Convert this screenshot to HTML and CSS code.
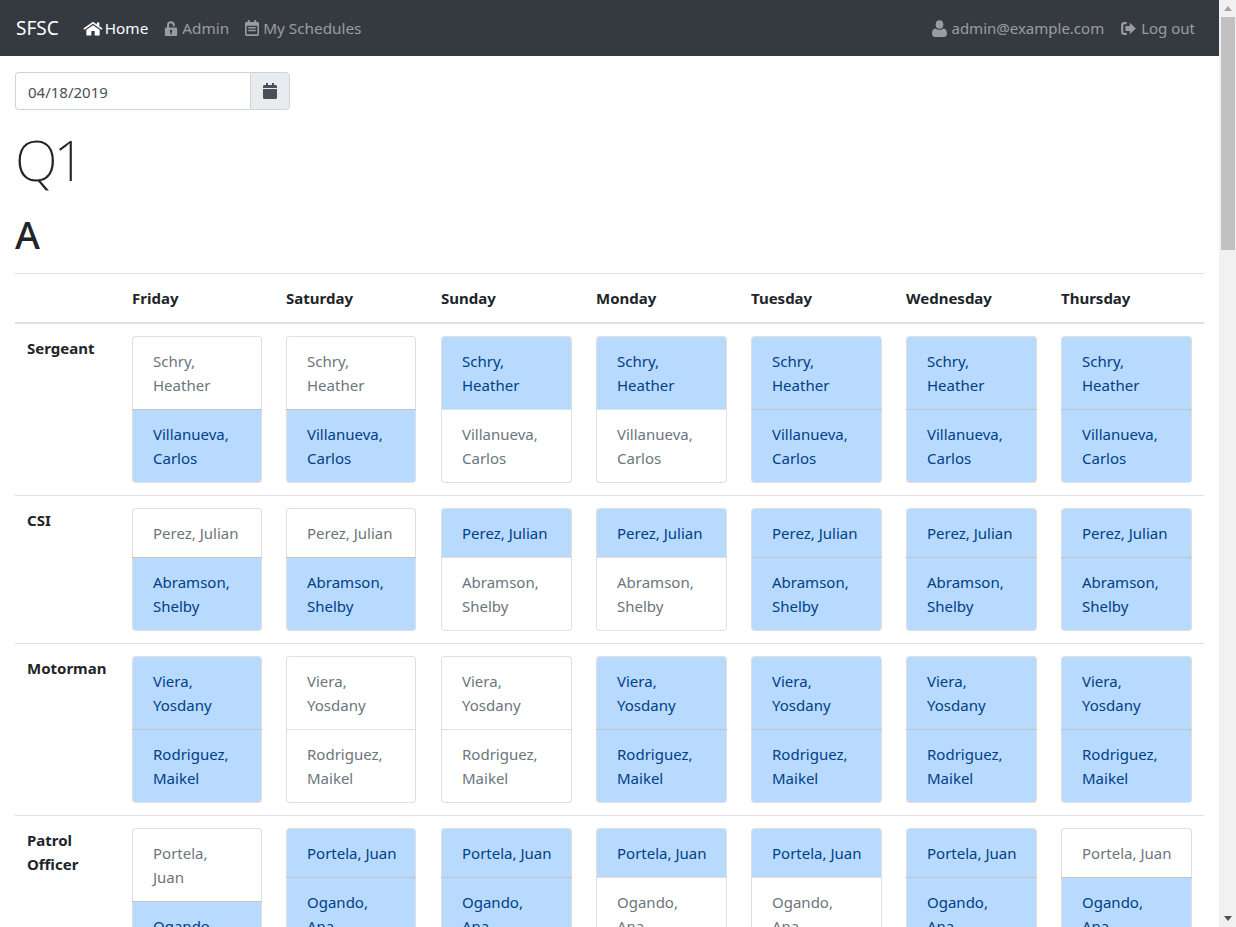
FILE: index.html
```html
<!DOCTYPE html>
<html>
<head>
    <title>SFSC</title>
    <link rel="stylesheet" href="styles.css">
</head>
<body>
    <div class="page">
        <nav class="navbar">
            <span class="brand">SFSC</span>
            <a class="nav-link wide active">
                <svg class="icon" width="20" height="15" viewBox="0 0 18 16" preserveAspectRatio="none"><path d="M9 .8.3 8l1 1.300L9 3l7.700 6.300 1-1.300-3-2.500V1.500h-2.200v2.200zM9 4.500 3 9.400V15.500h4.500v-4.800h3v4.800H15V9.400z"/></svg>
                <span>Home</span>
            </a>
            <a class="nav-link wide">
                <svg class="icon" width="14" height="15" viewBox="0 0 14 17"><path fill-rule="evenodd" d="M1.500 7.500h1V4.600a4.400 4.400 0 0 1 8.800 0V6H9V4.700a2.100 2.100 0 0 0-4.200 0v2.800h7.700A1.500 1.500 0 0 1 14 9v6.500a1.500 1.500 0 0 1-1.500 1.500h-11A1.500 1.500 0 0 1 0 15.500V9a1.500 1.500 0 0 1 1.500-1.500zM7 10a1.400 1.400 0 0 0-.8 2.600V15h1.600v-2.400A1.400 1.400 0 0 0 7 10z"/></svg>
                <span>Admin</span>
            </a>
            <a class="nav-link wide">
                <svg class="icon" width="14" height="16" viewBox="0 0 15 17"><path fill-rule="evenodd" d="M3 0h2v2h5V0h2v2h1.500A1.500 1.500 0 0 1 15 3.500v12a1.500 1.500 0 0 1-1.500 1.500h-12A1.500 1.500 0 0 1 0 15.500v-12A1.500 1.500 0 0 1 1.500 2H3zM1.700 6v9.300h11.600V6zM3.500 7.500h8V9h-8zm0 3h8V12h-8z"/></svg>
                <span>My Schedules</span>
            </a>
            <span class="spacer"></span>
            <a class="nav-link">
                <svg class="icon" width="15" height="17" viewBox="0 0 15 17"><ellipse cx="7.500" cy="4.500" rx="3.800" ry="4.300"/><path d="M3.500 8.500c1 .9 2.500 1.300 4 1.300s3-.4 4-1.300c2.300.2 3.500 2.200 3.500 5.300 0 2-1.200 3.200-3 3.200H3c-1.800 0-3-1.200-3-3.200 0-3.100 1.200-5.100 3.500-5.300z"/></svg>
                <span>admin@example.com</span>
            </a>
            <a class="nav-link">
                <svg class="icon" width="17" height="13" viewBox="0 0 17 15"><path d="M6.500 0v2.500H3.500a1 1 0 0 0-1 1v8a1 1 0 0 0 1 1h3V15h-3A3.500 3.500 0 0 1 0 11.500v-8A3.500 3.500 0 0 1 3.500 0zM10 1l7 6.500L10 14V10.300H5V4.700h5z"/></svg>
                <span>Log out</span>
            </a>
        </nav>

        <div class="content">
            <div class="input-group">
                <input class="date-input" type="text" value="04/18/2019">
                <span class="input-addon">
                    <svg width="14" height="16" viewBox="0 0 14 16"><path d="M3 0h2v2h4V0h2v2h1.500A1.500 1.500 0 0 1 14 3.500V5H0V3.500A1.500 1.500 0 0 1 1.500 2H3zM0 6h14v8.500a1.500 1.500 0 0 1-1.500 1.500h-11A1.500 1.500 0 0 1 0 14.500z"/></svg>
                </span>
            </div>

            <h1 class="display">Q1</h1>
            <h1 class="group-title">A</h1>

            <table class="schedule">
                <colgroup>
                    <col class="col-role">
                    <col class="col-narrow">
                    <col span="6">
                </colgroup>
                <thead>
                    <tr>
                        <th></th>
                        <th>Friday</th>
                        <th>Saturday</th>
                        <th>Sunday</th>
                        <th>Monday</th>
                        <th>Tuesday</th>
                        <th>Wednesday</th>
                        <th>Thursday</th>
                    </tr>
                </thead>
                <tbody>
                    <tr>
                        <th>Sergeant</th>
                        <td><ul class="list"><li>Schry,<br>Heather</li><li class="on">Villanueva,<br>Carlos</li></ul></td>
                        <td><ul class="list"><li>Schry,<br>Heather</li><li class="on">Villanueva,<br>Carlos</li></ul></td>
                        <td><ul class="list"><li class="on">Schry,<br>Heather</li><li>Villanueva,<br>Carlos</li></ul></td>
                        <td><ul class="list"><li class="on">Schry,<br>Heather</li><li>Villanueva,<br>Carlos</li></ul></td>
                        <td><ul class="list"><li class="on">Schry,<br>Heather</li><li class="on">Villanueva,<br>Carlos</li></ul></td>
                        <td><ul class="list"><li class="on">Schry,<br>Heather</li><li class="on">Villanueva,<br>Carlos</li></ul></td>
                        <td><ul class="list"><li class="on">Schry,<br>Heather</li><li class="on">Villanueva,<br>Carlos</li></ul></td>
                    </tr>
                    <tr>
                        <th>CSI</th>
                        <td><ul class="list"><li>Perez, Julian</li><li class="on">Abramson,<br>Shelby</li></ul></td>
                        <td><ul class="list"><li>Perez, Julian</li><li class="on">Abramson,<br>Shelby</li></ul></td>
                        <td><ul class="list"><li class="on">Perez, Julian</li><li>Abramson,<br>Shelby</li></ul></td>
                        <td><ul class="list"><li class="on">Perez, Julian</li><li>Abramson,<br>Shelby</li></ul></td>
                        <td><ul class="list"><li class="on">Perez, Julian</li><li class="on">Abramson,<br>Shelby</li></ul></td>
                        <td><ul class="list"><li class="on">Perez, Julian</li><li class="on">Abramson,<br>Shelby</li></ul></td>
                        <td><ul class="list"><li class="on">Perez, Julian</li><li class="on">Abramson,<br>Shelby</li></ul></td>
                    </tr>
                    <tr>
                        <th>Motorman</th>
                        <td><ul class="list"><li class="on">Viera,<br>Yosdany</li><li class="on">Rodriguez,<br>Maikel</li></ul></td>
                        <td><ul class="list"><li>Viera,<br>Yosdany</li><li>Rodriguez,<br>Maikel</li></ul></td>
                        <td><ul class="list"><li>Viera,<br>Yosdany</li><li>Rodriguez,<br>Maikel</li></ul></td>
                        <td><ul class="list"><li class="on">Viera,<br>Yosdany</li><li class="on">Rodriguez,<br>Maikel</li></ul></td>
                        <td><ul class="list"><li class="on">Viera,<br>Yosdany</li><li class="on">Rodriguez,<br>Maikel</li></ul></td>
                        <td><ul class="list"><li class="on">Viera,<br>Yosdany</li><li class="on">Rodriguez,<br>Maikel</li></ul></td>
                        <td><ul class="list"><li class="on">Viera,<br>Yosdany</li><li class="on">Rodriguez,<br>Maikel</li></ul></td>
                    </tr>
                    <tr>
                        <th>Patrol<br>Officer</th>
                        <td><ul class="list"><li>Portela,<br>Juan</li><li class="on">Ogando,<br>Ana</li></ul></td>
                        <td><ul class="list"><li class="on">Portela, Juan</li><li class="on">Ogando,<br>Ana</li></ul></td>
                        <td><ul class="list"><li class="on">Portela, Juan</li><li class="on">Ogando,<br>Ana</li></ul></td>
                        <td><ul class="list"><li class="on">Portela, Juan</li><li>Ogando,<br>Ana</li></ul></td>
                        <td><ul class="list"><li class="on">Portela, Juan</li><li>Ogando,<br>Ana</li></ul></td>
                        <td><ul class="list"><li class="on">Portela, Juan</li><li class="on">Ogando,<br>Ana</li></ul></td>
                        <td><ul class="list"><li>Portela, Juan</li><li class="on">Ogando,<br>Ana</li></ul></td>
                    </tr>
                </tbody>
            </table>
        </div>
    </div>

    <!-- drawn scrollbar, the page itself is clipped to the window -->
    <div class="scrollbar">
        <span class="arrow-up"></span>
        <div class="track"><div class="thumb"></div></div>
        <span class="arrow-down"></span>
    </div>
</body>
</html>
```

FILE: styles.css
```css
:root {
    --dark: #343a40;
    --border: #dee2e6;
    --muted: #6c757d;
    --primary-bg: #b8daff;
    --primary-text: #004085;
}

* {
    box-sizing: border-box;
}

html, body {
    height: 100%;
}

body {
    display: flex;
    margin: 0;
    overflow: hidden;
    font-family: "Noto Sans", Arial, sans-serif;
    font-size: 15px;
    line-height: 24px;
    color: #212529;
    background-color: #fff;
}

.page {
    flex: 1;
    min-width: 0;
    overflow: hidden;
}

.navbar {
    display: flex;
    align-items: center;
    height: 56px;
    padding: 0 16px;
    background-color: var(--dark);
}

.brand {
    margin-right: 16px;
    font-size: 19px;
    color: #fff;
}

.nav-link {
    display: flex;
    align-items: center;
    gap: 4px;
    padding: 8px;
    color: rgba(255, 255, 255, 0.5);
}

.nav-link.wide {
    font-size: 15.3px;
}

.nav-link.active {
    gap: 2px;
    color: #fff;
}

.icon {
    fill: currentColor;
}

.spacer {
    flex: 1;
}

.content {
    padding: 16px 15px 0;
}

.input-group {
    display: flex;
    width: 275px;
    height: 38px;
    margin-bottom: 16px;
}

.date-input {
    flex: 1;
    min-width: 0;
    padding: 7px 12px 5px;
    font-family: inherit;
    font-size: 15px;
    color: #495057;
    border: 1px solid #ced4da;
    border-right: none;
    border-radius: 4px 0 0 4px;
}

.input-addon {
    display: flex;
    align-items: center;
    justify-content: center;
    width: 40px;
    fill: #495057;
    background-color: #e9ecef;
    border: 1px solid #ced4da;
    border-radius: 0 4px 4px 0;
}

.display {
    margin: 0 0 18px;
    font-size: 56px;
    font-weight: 250;
    line-height: 67px;
    letter-spacing: -4px;
}

.group-title {
    margin: 0 0 15px;
    font-size: 38px;
    font-weight: 500;
    line-height: 47px;
}

.schedule {
    width: 1189px;
    table-layout: fixed;
    border-collapse: collapse;
}

.col-role {
    width: 105px;
}

.col-narrow {
    width: 154px;
}

.schedule th,
.schedule td {
    padding: 12px;
    text-align: left;
    vertical-align: top;
    border-top: 1px solid var(--border);
}

.schedule td:nth-child(3) {
    padding-right: 13px;
}

.schedule thead th {
    font-weight: 700;
    border-bottom: 2px solid var(--border);
}

.list {
    margin: 0;
    padding: 0;
    list-style: none;
    border-radius: 4px;
}

.list li {
    padding: 12px 20px;
    color: var(--muted);
    white-space: nowrap;
    background-color: #fff;
    border: 1px solid rgba(0, 0, 0, 0.125);
    margin-bottom: -1px;
}

.list li:first-child {
    border-radius: 4px 4px 0 0;
}

.list li:last-child {
    margin-bottom: 0;
    border-radius: 0 0 4px 4px;
}

.list li.on {
    color: var(--primary-text);
    background-color: var(--primary-bg);
    background-clip: padding-box;
}

.scrollbar {
    display: flex;
    flex-direction: column;
    align-items: center;
    flex: none;
    width: 17px;
    height: 100%;
    background-color: #f1f1f1;
}

.arrow-up,
.arrow-down {
    flex: none;
    width: 0;
    height: 0;
    margin: 6px 0;
    border-left: 4px solid transparent;
    border-right: 4px solid transparent;
}

.arrow-up {
    border-bottom: 5px solid #a3a3a3;
}

.arrow-down {
    border-top: 5px solid #505050;
}

.track {
    flex: 1;
    width: 100%;
    padding: 0 1px 0 2px;
}

.thumb {
    height: 233px;
    background-color: #c1c1c1;
}
```
